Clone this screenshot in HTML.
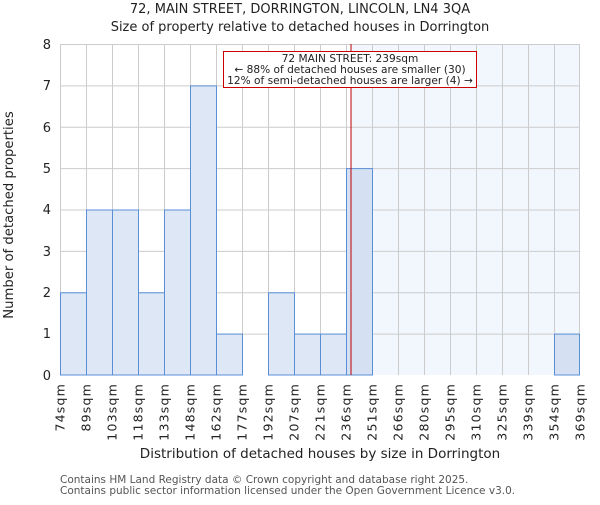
<!DOCTYPE html>
<html><head><meta charset="utf-8"><style>
body{margin:0;background:#fff;}
svg text{font-family:"DejaVu Sans","Liberation Sans",sans-serif;fill:#222;}
</style></head><body>
<svg width="600" height="500" xmlns="http://www.w3.org/2000/svg">
<rect width="600" height="500" fill="#fff"/>
<text x="300" y="13" font-size="13" text-anchor="middle">72, MAIN STREET, DORRINGTON, LINCOLN, LN4 3QA</text>
<text x="300" y="31" font-size="13" text-anchor="middle">Size of property relative to detached houses in Dorrington</text>
<rect x="351" y="44" width="229" height="331" fill="#f2f6fd"/>
<g stroke="#cccccc" stroke-width="1">
<line x1="60" y1="44.5" x2="580" y2="44.5"/><line x1="60" y1="85.9" x2="580" y2="85.9"/><line x1="60" y1="127.3" x2="580" y2="127.3"/><line x1="60" y1="168.6" x2="580" y2="168.6"/><line x1="60" y1="210" x2="580" y2="210"/><line x1="60" y1="251.4" x2="580" y2="251.4"/><line x1="60" y1="292.8" x2="580" y2="292.8"/><line x1="60" y1="334.1" x2="580" y2="334.1"/>
<line x1="60.5" y1="44" x2="60.5" y2="375"/><line x1="86.5" y1="44" x2="86.5" y2="375"/><line x1="112.5" y1="44" x2="112.5" y2="375"/><line x1="138.5" y1="44" x2="138.5" y2="375"/><line x1="164.5" y1="44" x2="164.5" y2="375"/><line x1="190.5" y1="44" x2="190.5" y2="375"/><line x1="216.5" y1="44" x2="216.5" y2="375"/><line x1="242.5" y1="44" x2="242.5" y2="375"/><line x1="268.5" y1="44" x2="268.5" y2="375"/><line x1="294.5" y1="44" x2="294.5" y2="375"/><line x1="320.5" y1="44" x2="320.5" y2="375"/><line x1="346.5" y1="44" x2="346.5" y2="375"/><line x1="372.5" y1="44" x2="372.5" y2="375"/><line x1="398.5" y1="44" x2="398.5" y2="375"/><line x1="424.5" y1="44" x2="424.5" y2="375"/><line x1="450.5" y1="44" x2="450.5" y2="375"/><line x1="476.5" y1="44" x2="476.5" y2="375"/><line x1="502.5" y1="44" x2="502.5" y2="375"/><line x1="528.5" y1="44" x2="528.5" y2="375"/><line x1="554.5" y1="44" x2="554.5" y2="375"/><line x1="579.5" y1="44" x2="579.5" y2="375"/>
</g>
<g fill="#dde7f5" stroke="#5a8fd8" stroke-width="1">
<rect x="60.5" y="292.8" width="26" height="82.2"/>
<rect x="86.5" y="210" width="26" height="165"/>
<rect x="112.5" y="210" width="26" height="165"/>
<rect x="138.5" y="292.8" width="26" height="82.2"/>
<rect x="164.5" y="210" width="26" height="165"/>
<rect x="190.5" y="85.9" width="26" height="289.1"/>
<rect x="216.5" y="334.1" width="26" height="40.9"/>
<rect x="268.5" y="292.8" width="26" height="82.2"/>
<rect x="294.5" y="334.1" width="26" height="40.9"/>
<rect x="320.5" y="334.1" width="26" height="40.9"/>
<rect x="346.5" y="168.6" width="26" height="206.4" fill="#d5e1f3"/>
<rect x="554.5" y="334.1" width="25" height="40.9" fill="#d5e1f3"/>
</g>
<line x1="351" y1="44" x2="351" y2="375" stroke="#bb0000" stroke-width="1"/>
<rect x="223.5" y="51.5" width="253" height="36" fill="#fff" stroke="#cc0000" stroke-width="1"/>
<g font-size="10.6" text-anchor="middle">
<text x="350" y="62">72 MAIN STREET: 239sqm</text>
<text x="350" y="73">← 88% of detached houses are smaller (30)</text>
<text x="350" y="84">12% of semi-detached houses are larger (4) →</text>
</g>
<g font-size="13" text-anchor="end">
<text x="51" y="49">8</text><text x="51" y="90">7</text><text x="51" y="132">6</text><text x="51" y="173">5</text><text x="51" y="214">4</text><text x="51" y="256">3</text><text x="51" y="297">2</text><text x="51" y="338">1</text><text x="51" y="380">0</text>
</g>
<text transform="translate(13,215) rotate(-90)" font-size="13.2" text-anchor="middle">Number of detached properties</text>
<g font-size="12.5" text-anchor="end" letter-spacing="1.2">
<text transform="translate(64.5,383) rotate(-90)">74sqm</text>
<text transform="translate(90.5,383) rotate(-90)">89sqm</text>
<text transform="translate(116.5,383) rotate(-90)">103sqm</text>
<text transform="translate(142.5,383) rotate(-90)">118sqm</text>
<text transform="translate(168.5,383) rotate(-90)">133sqm</text>
<text transform="translate(194.5,383) rotate(-90)">148sqm</text>
<text transform="translate(220.5,383) rotate(-90)">162sqm</text>
<text transform="translate(246.5,383) rotate(-90)">177sqm</text>
<text transform="translate(272.5,383) rotate(-90)">192sqm</text>
<text transform="translate(298.5,383) rotate(-90)">207sqm</text>
<text transform="translate(324.5,383) rotate(-90)">221sqm</text>
<text transform="translate(350.5,383) rotate(-90)">236sqm</text>
<text transform="translate(376.5,383) rotate(-90)">251sqm</text>
<text transform="translate(402.5,383) rotate(-90)">266sqm</text>
<text transform="translate(428.5,383) rotate(-90)">280sqm</text>
<text transform="translate(454.5,383) rotate(-90)">295sqm</text>
<text transform="translate(480.5,383) rotate(-90)">310sqm</text>
<text transform="translate(506.5,383) rotate(-90)">325sqm</text>
<text transform="translate(532.5,383) rotate(-90)">339sqm</text>
<text transform="translate(558.5,383) rotate(-90)">354sqm</text>
<text transform="translate(584.5,383) rotate(-90)">369sqm</text>
</g>
<text x="320" y="458" font-size="13.5" text-anchor="middle">Distribution of detached houses by size in Dorrington</text>
<g font-size="10.5">
<text x="60" y="483" style="fill:#555">Contains HM Land Registry data © Crown copyright and database right 2025.</text>
<text x="60" y="494" style="fill:#555">Contains public sector information licensed under the Open Government Licence v3.0.</text>
</g>
</svg>
</body></html>
